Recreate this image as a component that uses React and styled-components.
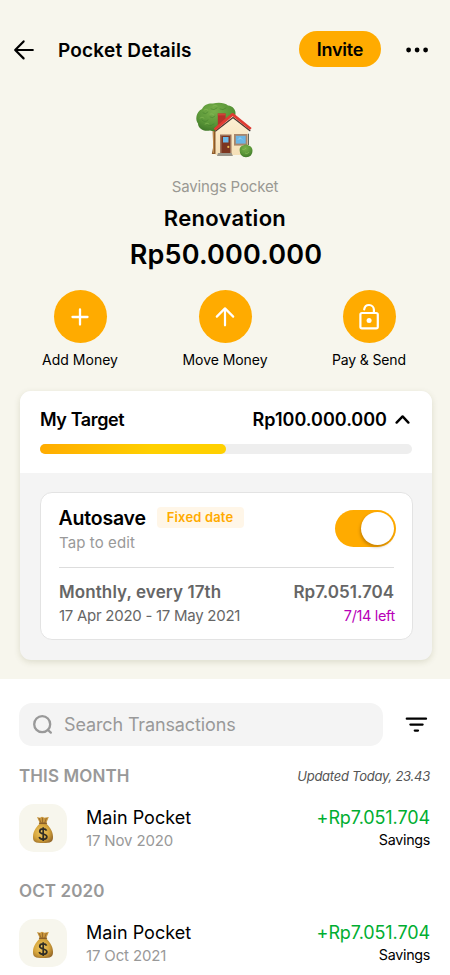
import React, { useState } from "react"
import styled, { createGlobalStyle } from "styled-components"

const transactions = [
  {
    month: "THIS MONTH",
    updated: "Updated Today, 23.43",
    items: [{ name: "Main Pocket", date: "17 Nov 2020", amount: "+Rp7.051.704", type: "Savings" }],
  },
  {
    month: "OCT 2020",
    items: [{ name: "Main Pocket", date: "17 Oct 2021", amount: "+Rp7.051.704", type: "Savings" }],
  },
]

const BackIcon = () => (
  <svg width="22" height="22" viewBox="0 0 22 22" fill="none" stroke="#000" strokeWidth="2.2" strokeLinecap="round" strokeLinejoin="round">
    <path d="M19.8 11H2.6M10.6 2.4L2.2 11L10.6 19.4" />
  </svg>
)

const MoreIcon = () => (
  <svg width="24" height="6" viewBox="0 0 24 6">
    <circle cx="3.6" cy="3" r="2.4" />
    <circle cx="12.1" cy="3" r="2.4" />
    <circle cx="20.6" cy="3" r="2.4" />
  </svg>
)

const PlusIcon = () => (
  <svg width="28" height="28" viewBox="0 0 28 28" fill="none" stroke="#fff" strokeWidth="2.3" strokeLinecap="round">
    <path d="M14 6.5V21.5M6.5 14H21.5" />
  </svg>
)

const ArrowUpIcon = () => (
  <svg width="28" height="28" viewBox="0 0 28 28" fill="none" stroke="#fff" strokeWidth="2.2" strokeLinecap="round" strokeLinejoin="round">
    <path d="M14 22.3V5.6M5.8 13.6L14 5.4L22.2 13.6" />
  </svg>
)

const UnlockIcon = () => (
  <svg width="28" height="28" viewBox="0 0 28 28" fill="none" stroke="#fff" strokeWidth="2.2" strokeLinecap="round" strokeLinejoin="round">
    <rect x="5.4" y="10" width="17.4" height="15.4" rx="1.6" />
    <path d="M9.2 6.4C9.6 3.9 11.4 2 14 2C16.8 2 18.9 4.2 18.9 6.8V10" />
    <circle cx="14.1" cy="17.6" r="2.5" fill="#fff" stroke="none" />
  </svg>
)

const ChevronIcon = () => (
  <svg width="16" height="12" viewBox="0 0 16 12" fill="none" stroke="#000" strokeWidth="2.4" strokeLinecap="round" strokeLinejoin="round">
    <path d="M2.6 9.6L8.6 3.4L14.4 9.6" />
  </svg>
)

const SearchIcon = () => (
  <svg width="22" height="22" viewBox="0 0 22 22" fill="none" stroke="#999" strokeWidth="2.3" strokeLinecap="round">
    <circle cx="10.2" cy="10.2" r="8" />
    <path d="M16 16L18.8 18.6" />
  </svg>
)

const FilterIcon = () => (
  <svg width="24" height="18" viewBox="0 0 24 18" stroke="#000" strokeWidth="2.3" strokeLinecap="round">
    <path d="M2.8 2.7H22M6.4 8.6H18.6M10.8 14.6H14" />
  </svg>
)

const HouseIcon = () => (
  <svg width="60" height="60" viewBox="0 0 60 60">
    <defs>
      <radialGradient id="leaves" cx="0.45" cy="0.3" r="0.75">
        <stop offset="0" stopColor="#79b04a" />
        <stop offset="0.6" stopColor="#5a9638" />
        <stop offset="1" stopColor="#3d7527" />
      </radialGradient>
      <linearGradient id="wall" x1="0" y1="0" x2="0" y2="1">
        <stop offset="0" stopColor="#fdf0d4" />
        <stop offset="1" stopColor="#f5e0b8" />
      </linearGradient>
    </defs>
    <path d="M17.5 27H22V54H16.8L18.2 47Z" fill="#8b5a2b" />
    <path d="M18.5 30V53" stroke="#c08a4b" strokeWidth="1" />
    <path
      d="M7 9C9 4.5 14 3 18 3.5C23 2 30 2.5 33 5.5C38 6 41 10 40.5 14C40 20 35 26 29 28C25 31 19 32 15 30.5C8 32 3 28 3 23.5C0 20 .8 12 7 9Z"
      fill="url(#leaves)"
    />
    <g stroke="#427d2b" strokeWidth="1" fill="none" strokeLinecap="round" opacity="0.55">
      <path d="M8 13Q11 15 13 12M16 9Q19 11 22 8M7 20Q10 23 13 20M15 17Q18 19 20 16M13 25Q16 27 19 24M25 9Q28 11 31 8" />
    </g>
    <g stroke="#8fc25c" strokeWidth="0.9" fill="none" strokeLinecap="round" opacity="0.6">
      <path d="M9 10Q11 8 13 10M18 6Q20 5 22 6M5 18Q7 16 9 18M15 14Q17 13 19 15M10 24Q12 22 14 24" />
    </g>
    <path d="M52.5 33L54 34V45H52Z" fill="#66665c" />
    <path d="M20.5 29L37.5 15.5L53 29V55H20.5Z" fill="url(#wall)" />
    <path d="M22.8 13.6H30.6V21L22.8 27Z" fill="#b5312a" />
    <path d="M22.8 13.6H30.6V15.4H22.8Z" fill="#cf4339" />
    <path d="M20.3 31.3L38 17.6L55.3 31" fill="none" stroke="#493631" strokeWidth="1.3" />
    <path d="M19.6 29.6L37.6 14.4L55.8 29" fill="none" stroke="#df3b33" strokeWidth="2.7" strokeLinejoin="round" />
    <path d="M25 34.5H36.5V54H25Z" fill="#9d7259" />
    <path d="M26.5 36H35V54H26.5Z" fill="#7c3520" />
    <path d="M28 37H33.5V42.5H28Z" fill="#6db9e8" />
    <circle cx="33.3" cy="46.9" r="1.1" fill="#edbd55" />
    <path d="M39 34H52.5V45.6H39Z" fill="#a9866c" />
    <path d="M40.8 35.8H50.7V43.6H40.8Z" fill="#6bb5e5" />
    <path d="M42 40L45 37L49 41L46 39Z" fill="#8bc9ef" />
    <path d="M23 53H36.5L38 56H22Z" fill="#99958a" />
    <path d="M44.6 50Q44.6 46 48.2 45.4Q51 43.6 53.7 45.4Q57.5 46.5 57.5 50.8Q57.5 57 51 57.2Q44.7 57 44.6 50Z" fill="url(#leaves)" />
    <path d="M47 49Q49 51 51 48M50 53Q52 55 54 52" stroke="#8fc25c" strokeWidth="0.8" fill="none" opacity="0.7" />
  </svg>
)

const MoneyBagIcon = () => (
  <svg width="22" height="28" viewBox="0 0 22 28">
    <defs>
      <radialGradient id="bag" cx="0.42" cy="0.45" r="0.65">
        <stop offset="0" stopColor="#efc964" />
        <stop offset="0.6" stopColor="#d5a43b" />
        <stop offset="1" stopColor="#96692a" />
      </radialGradient>
    </defs>
    <path d="M5 1L8 1.8L10 .8L12.5 1.8L16.8 1L14.3 7H7.7Z" fill="#c8953c" />
    <path d="M7 2L9 6.6M10.5 2V6.6M14.4 2L12.8 6.6" stroke="#855b25" strokeWidth="0.7" />
    <path d="M8 7.5C5 10 1.2 14.5 1 20.5C.8 26 3 27 11 27C19 27 21.2 26 21 20.5C20.8 14.5 17 10 14 7.5Z" fill="url(#bag)" />
    <path d="M7.6 7.2H14.4" stroke="#8a5f27" strokeWidth="1.5" strokeLinecap="round" />
    <path d="M14.6 14.6C14 13.2 12.7 12.8 11.1 12.8C9.1 12.8 7.7 13.8 7.7 15.3C7.7 18.9 14.9 17.1 14.9 20.8C14.9 22.4 13.4 23.4 11.2 23.4C9.2 23.4 7.7 22.6 7.2 21M11.2 11.2V25" fill="none" stroke="#302d25" strokeWidth="1.7" />
  </svg>
)

const App = () => {
  const [autosave, setAutosave] = useState(true)

  return (
    <Page>
      <GlobalStyle />
      <Header>
        <IconButton aria-label="Back"><BackIcon /></IconButton>
        <Title>Pocket Details</Title>
        <Invite>Invite</Invite>
        <IconButton aria-label="More"><MoreIcon /></IconButton>
      </Header>

      <Hero>
        <HouseIcon />
        <PocketType>Savings Pocket</PocketType>
        <PocketName>Renovation</PocketName>
        <Balance>Rp50.000.000</Balance>
      </Hero>

      <Actions>
        <Action>
          <Circle><PlusIcon /></Circle>
          <ActionLabel $spacing="0">Add Money</ActionLabel>
        </Action>
        <Action>
          <Circle><ArrowUpIcon /></Circle>
          <ActionLabel $spacing="-0.05px">Move Money</ActionLabel>
        </Action>
        <Action>
          <Circle><UnlockIcon /></Circle>
          <ActionLabel $spacing="-0.15px">Pay &amp; Send</ActionLabel>
        </Action>
      </Actions>

      <TargetCard>
        <Target>
          <TargetRow>
            <TargetLabel>My Target</TargetLabel>
            <TargetAmount>Rp100.000.000</TargetAmount>
            <ChevronIcon />
          </TargetRow>
          <Track><Fill /></Track>
        </Target>
        <AutosaveCard>
          <AutosaveTop>
            <div>
              <AutosaveHead>
                <AutosaveTitle>Autosave</AutosaveTitle>
                <Badge>Fixed date</Badge>
              </AutosaveHead>
              <Hint>Tap to edit</Hint>
            </div>
            <Toggle $on={autosave} aria-label="Autosave" onClick={() => setAutosave(!autosave)}>
              <Knob />
            </Toggle>
          </AutosaveTop>
          <Schedule>
            <ScheduleRow>
              <Frequency>Monthly, every 17th</Frequency>
              <ScheduleAmount>Rp7.051.704</ScheduleAmount>
            </ScheduleRow>
            <ScheduleRow>
              <Period>17 Apr 2020 - 17 May 2021</Period>
              <Remaining>7/14 left</Remaining>
            </ScheduleRow>
          </Schedule>
        </AutosaveCard>
      </TargetCard>

      <History>
        <SearchRow>
          <SearchBox><SearchIcon /><span>Search Transactions</span></SearchBox>
          <IconButton aria-label="Filter"><FilterIcon /></IconButton>
        </SearchRow>
        {transactions.map((group) => (
          <Group key={group.month}>
            <GroupHead>
              <Month>{group.month}</Month>
              {group.updated && <Updated>{group.updated}</Updated>}
            </GroupHead>
            {group.items.map((item) => (
              <Transaction key={item.date}>
                <Tile><MoneyBagIcon /></Tile>
                <Details>
                  <Name>{item.name}</Name>
                  <DateText>{item.date}</DateText>
                </Details>
                <Details $right>
                  <Amount>{item.amount}</Amount>
                  <Kind>{item.type}</Kind>
                </Details>
              </Transaction>
            ))}
          </Group>
        ))}
      </History>
    </Page>
  )
}

const GlobalStyle = createGlobalStyle`
  * { box-sizing: border-box; }
  body {
    margin: 0;
    background: #f7f6ed;
  }
  svg { display: block; flex: none; }
  button {
    border: 0;
    padding: 0;
    font: inherit;
    color: inherit;
    background: none;
    cursor: pointer;
  }
`
const Page = styled.main`
  width: 450px;
  height: 975px;
  overflow: hidden;
  display: flex;
  flex-direction: column;
  background: #f7f6ed;
  color: #000;
  font-family: Inter, "Liberation Sans", sans-serif;
  white-space: nowrap;
`
const Header = styled.header`
  display: flex;
  align-items: center;
  height: 38px;
  margin-top: 31px;
  padding: 0 21px 0 13px;
`
const IconButton = styled.button`
  display: flex;
`
const Title = styled.h1`
  flex: 1;
  margin: 2px 0 0 23px;
  font-size: 19px;
  font-weight: 600;
  line-height: 28px;
  letter-spacing: 0.2px;
`
const Invite = styled.button`
  width: 82px;
  height: 36px;
  margin: 0 24px 2px 0;
  border-radius: 18px;
  background: #ffab00;
  font-size: 18px;
  font-weight: 600;
  letter-spacing: -0.2px;
`
const Hero = styled.section`
  display: flex;
  flex-direction: column;
  align-items: center;
  margin-top: 31px;
`
const PocketType = styled.div`
  margin-top: 16px;
  color: #9a9993;
  font-size: 15px;
  line-height: 22px;
  letter-spacing: -0.15px;
`
const PocketName = styled.h2`
  margin: 4px 0 0;
  font-size: 22px;
  font-weight: 600;
  line-height: 32px;
  letter-spacing: 0.3px;
`
const Balance = styled.div`
  margin: 3px 0 0 2px;
  font-size: 27px;
  font-weight: 600;
  line-height: 36px;
  letter-spacing: 0.2px;
`
const Actions = styled.nav`
  display: grid;
  grid-template-columns: 76px 86px 74px;
  justify-content: space-between;
  margin-top: 17px;
  padding: 0 44px 0 42px;
`
const Action = styled.button`
  display: flex;
  flex-direction: column;
  align-items: center;
`
const Circle = styled.span`
  display: flex;
  align-items: center;
  justify-content: center;
  width: 53px;
  height: 53px;
  border-radius: 50%;
  background: #ffab00;
`
const ActionLabel = styled.span`
  margin-top: 7px;
  font-size: 14px;
  line-height: 20px;
  letter-spacing: ${(p) => p.$spacing};
`
const TargetCard = styled.section`
  width: 412px;
  height: 269px;
  margin: 21px 0 0 20px;
  border-radius: 11px;
  background: #f4f4f4;
  overflow: hidden;
  box-shadow: 0 2px 6px rgba(90, 90, 30, 0.16);
  flex: none;
`
const Target = styled.div`
  height: 82px;
  padding: 16px 20px 0;
  background: #fff;
`
const TargetRow = styled.div`
  display: flex;
  align-items: center;
  height: 24px;
  padding-right: 2px;
  font-size: 18px;
  font-weight: 600;
`
const TargetLabel = styled.span`
  flex: 1;
  letter-spacing: -0.4px;
`
const TargetAmount = styled.span`
  margin-right: 7px;
  letter-spacing: 0;
`
const Track = styled.div`
  height: 10px;
  margin-top: 13px;
  border-radius: 5px;
  background: #eee;
`
const Fill = styled.div`
  width: 50%;
  height: 10px;
  border-radius: 5px;
  background: linear-gradient(100deg, #ffab00, #ffd000 60%);
`
const AutosaveCard = styled.div`
  width: 373px;
  height: 148px;
  margin: 19px 0 0 20px;
  padding: 13px 17px 0 18px;
  border: 1px solid #e3e3e3;
  border-radius: 12px;
  background: #fff;
`
const AutosaveTop = styled.div`
  display: flex;
  justify-content: space-between;
  height: 61px;
`
const AutosaveHead = styled.div`
  display: flex;
  align-items: center;
  gap: 10px;
  height: 24px;
  margin-left: -0.5px;
`
const AutosaveTitle = styled.span`
  width: 88px;
  font-size: 19.5px;
  font-weight: 600;
  letter-spacing: -0.2px;
`
const Badge = styled.span`
  width: 87px;
  height: 21px;
  margin-top: -1px;
  border-radius: 4px;
  background: #fff6e8;
  color: #ffab00;
  font-size: 13px;
  font-weight: 600;
  line-height: 21px;
  text-align: center;
  letter-spacing: 0.15px;
`
const Hint = styled.div`
  margin-top: 2px;
  color: #999;
  font-size: 15px;
  line-height: 22px;
  letter-spacing: 0.1px;
`
const Toggle = styled.button`
  display: flex;
  align-items: center;
  justify-content: ${(p) => (p.$on ? "flex-end" : "flex-start")};
  width: 61px;
  height: 37px;
  margin: 4px -1px 0 0;
  padding: 2px;
  border-radius: 19px;
  background: ${(p) => (p.$on ? "#ffab00" : "#ccc")};
`
const Knob = styled.span`
  width: 33px;
  height: 33px;
  border-radius: 50%;
  background: #fff;
  box-shadow: -1px 2px 3px rgba(120, 70, 0, 0.4);
`
const Schedule = styled.div`
  margin-right: 1px;
  padding-top: 13px;
  border-top: 1px solid #ddd;
  color: #666;
`
const ScheduleRow = styled.div`
  display: flex;
  justify-content: space-between;
  height: 23px;
  line-height: 23px;
`
const Frequency = styled.span`
  font-size: 17px;
  font-weight: 600;
  letter-spacing: 0.1px;
`
const ScheduleAmount = styled(Frequency)`
  letter-spacing: 0;
`
const Period = styled.span`
  font-size: 15px;
  letter-spacing: -0.27px;
`
const Remaining = styled.span`
  margin-right: -1px;
  color: #b800b8;
  font-size: 14.5px;
  letter-spacing: -0.35px;
`
const History = styled.section`
  flex: 1;
  margin-top: 19px;
  padding: 24px 20px 0 19px;
  background: #fff;
`
const SearchRow = styled.div`
  display: flex;
  align-items: center;
  justify-content: space-between;
  padding-right: 2px;
`
const SearchBox = styled.div`
  display: flex;
  align-items: center;
  gap: 10px;
  width: 364px;
  height: 43px;
  padding-left: 13px;
  border-radius: 13px;
  background: #f4f4f4;
  color: #999;
  font-size: 18px;
  letter-spacing: -0.13px;
`
const Group = styled.section`
  height: 115px;
  padding-top: 17px;
`
const GroupHead = styled.div`
  display: flex;
  justify-content: space-between;
  height: 24px;
  line-height: 24px;
`
const Month = styled.h3`
  margin: 1px 0 0;
  color: #999;
  font-size: 17px;
  font-weight: 600;
  letter-spacing: 0.1px;
`
const Updated = styled.span`
  margin-top: 1px;
  color: #555;
  font-size: 13px;
  font-style: italic;
  letter-spacing: -0.25px;
`
const Transaction = styled.div`
  display: flex;
  margin-top: 17px;
`
const Tile = styled.div`
  display: flex;
  align-items: center;
  justify-content: center;
  width: 48px;
  height: 48px;
  padding-top: 3px;
  margin-right: 19px;
  border-radius: 15px;
  background: #f7f6ed;
`
const Details = styled.div`
  flex: ${(p) => (p.$right ? "none" : 1)};
  text-align: ${(p) => (p.$right ? "right" : "left")};
`
const Name = styled.div`
  margin-top: 2px;
  font-size: 18px;
  line-height: 23px;
  letter-spacing: 0.05px;
`
const DateText = styled.div`
  color: #999;
  font-size: 15px;
  line-height: 24px;
  letter-spacing: -0.15px;
`
const Amount = styled(Name)`
  color: #00ae31;
  letter-spacing: -0.1px;
`
const Kind = styled.div`
  font-size: 14.3px;
  line-height: 22px;
  letter-spacing: -0.3px;
`

export default App
